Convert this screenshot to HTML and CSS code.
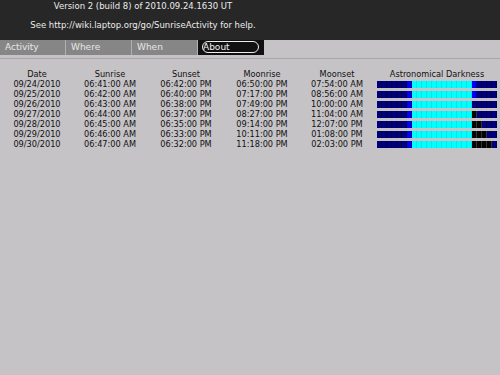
FILE: index.html
```html
<!DOCTYPE html>
<html lang="en">
<head>
    <meta charset="UTF-8">
    <title>Sunrise</title>
    <link rel="stylesheet" href="styles.css">
</head>
<body>
    <header class="top">
        <div class="top-text">
            <p>Version 2 (build 8) of 2010.09.24.1630 UT</p>
            <p>See http://wiki.laptop.org/go/SunriseActivity for help.</p>
        </div>
    </header>

    <nav class="tabs">
        <span class="tab">Activity</span>
        <span class="tab">Where</span>
        <span class="tab">When</span>
        <span class="tab active"><span class="tab-outline">About</span></span>
    </nav>

    <main>
        <table class="sun-table">
            <thead>
                <tr>
                    <th class="c-date">Date</th>
                    <th class="c-rise">Sunrise</th>
                    <th class="c-set">Sunset</th>
                    <th class="c-mrise">Moonrise</th>
                    <th class="c-mset">Moonset</th>
                    <th class="c-dark">Astronomical Darkness</th>
                </tr>
            </thead>
            <tbody id="rows"></tbody>
        </table>
    </main>

    <script>
        // one letter per hour: n = dark, b = twilight, c = daylight, k = moon up
        const days = [
            ["09/24/2010", "06:41:00 AM", "06:42:00 PM", "06:50:00 PM", "07:54:00 AM", "nnnnnnbccccccccccccbnnnn"],
            ["09/25/2010", "06:42:00 AM", "06:40:00 PM", "07:17:00 PM", "08:56:00 AM", "nnnnnnbccccccccccccbnnnn"],
            ["09/26/2010", "06:43:00 AM", "06:38:00 PM", "07:49:00 PM", "10:00:00 AM", "nnnnnnbccccccccccccnnnnn"],
            ["09/27/2010", "06:44:00 AM", "06:37:00 PM", "08:27:00 PM", "11:04:00 AM", "nnnnnnbccccccccccccknnnn"],
            ["09/28/2010", "06:45:00 AM", "06:35:00 PM", "09:14:00 PM", "12:07:00 PM", "nnnnnnbcccccccccccckknnn"],
            ["09/29/2010", "06:46:00 AM", "06:33:00 PM", "10:11:00 PM", "01:08:00 PM", "nnnnnnbcccccccccccckkknn"],
            ["09/30/2010", "06:47:00 AM", "06:32:00 PM", "11:18:00 PM", "02:03:00 PM", "nnnnnnbcccccccccccckkkkn"]
        ];

        const body = document.getElementById('rows');
        days.forEach(day => {
            const row = document.createElement('tr');
            let cells = '';
            day.slice(0, 5).forEach(text => {
                cells += `<td>${text}</td>`;
            });
            let hours = '';
            day[5].split('').forEach(h => {
                hours += `<span class="hour ${h}"></span>`;
            });
            row.innerHTML = cells + `<td><div class="bar">${hours}</div></td>`;
            body.appendChild(row);
        });
    </script>
</body>
</html>
```

FILE: styles.css
```css
body {
    margin: 0;
    width: 500px;
    height: 375px;
    background-color: #c5c3c6;
    font-family: "DejaVu Sans", sans-serif;
    color: #111;
    overflow: hidden;
}

.top {
    background-color: #272727;
    height: 40px;
    color: #ececec;
    font-size: 8.5px;
}

.top-text {
    width: 286px;
    text-align: center;
    padding-top: 1px;
}

.top p {
    margin: 0;
    line-height: 10px;
}

.top p + p {
    margin-top: 9px;
}

.tabs {
    display: flex;
    height: 15px;
    border-bottom: 3px solid #c5c3c6;
    box-shadow: 0 1px 0 #a9a7aa;
}

.tab {
    width: 66px;
    background-color: #868686;
    color: #e6e6e6;
    font-size: 9px;
    line-height: 15px;
    padding-left: 5px;
    box-sizing: border-box;
    border-right: 1px solid #b0b0b0;
}

.tab.active {
    background-color: #111;
    color: #f2f2f2;
    border-right: none;
    padding: 1px 5px 2px 4px;
}

.tab-outline {
    display: block;
    height: 12px;
    line-height: 11px;
    border: 1px solid #eee;
    border-radius: 6px;
    box-sizing: border-box;
}

.sun-table {
    margin-top: 11px;
    border-collapse: collapse;
    table-layout: fixed;
    width: 498px;
    font-size: 8.2px;
}

.sun-table th,
.sun-table td {
    padding: 0;
    height: 10px;
    line-height: 10px;
    font-weight: normal;
    text-align: center;
    white-space: nowrap;
}

.c-date { width: 74px; }
.c-rise { width: 72px; }
.c-set { width: 80px; }
.c-mrise { width: 72px; }
.c-mset { width: 78px; }
.c-dark { width: 122px; }

.bar {
    display: flex;
    margin-left: 1px;
    height: 7px;
}

.hour {
    width: 5px;
    height: 7px;
    box-sizing: border-box;
}

.hour.n {
    background-color: #00007c;
    border-right: 1px solid #000048;
}

.hour.b {
    background-color: #0000f4;
    border-right: 1px solid #0000a0;
}

.hour.c {
    background-color: #00ffff;
    border-right: 1px solid #00e6e6;
}

.hour.k {
    background-color: #050505;
    border-right: 1px solid #333;
}
```
